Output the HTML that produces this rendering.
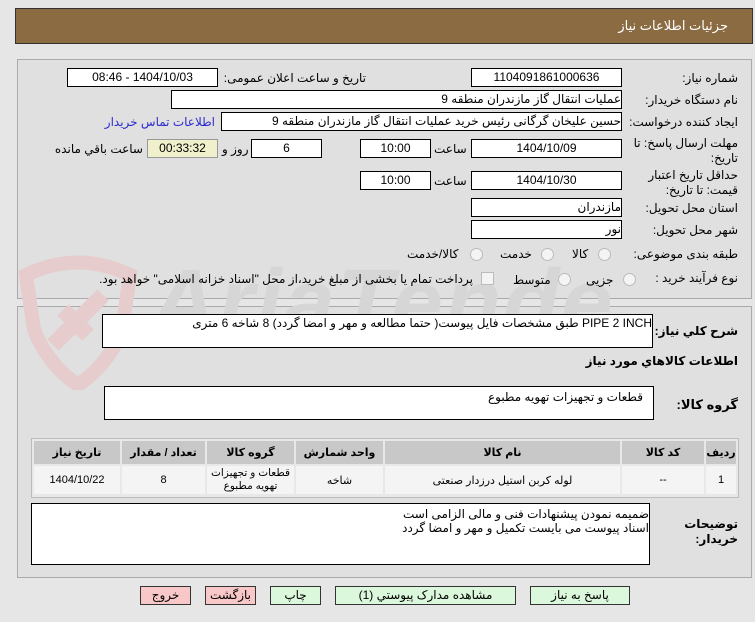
<!DOCTYPE html>
<html><head><meta charset="utf-8">
<style>
body{margin:0;width:755px;height:622px;background:#e6e6e6;font-family:"Liberation Sans","DejaVu Sans",sans-serif;font-size:12px;color:#000;position:relative;overflow:hidden}
.a{position:absolute}
.hdr{left:15px;top:8px;width:736px;height:34px;background:#8b6b42;border:1px solid #333;color:#fff;font-size:13px}
.panel{border:1px solid #aaa;background:#e0e0e0}
.box{position:absolute;background:#fff;border:1px solid #000;height:17px;line-height:17px;text-align:center;font-size:12px;direction:rtl;white-space:nowrap;overflow:hidden}
.lbl{position:absolute;direction:rtl;white-space:nowrap;font-size:12px;text-align:right}
.rad{position:absolute;width:11px;height:11px;border:1px solid #bbb;border-radius:50%;background:#f4f4f4}
table{border-collapse:separate;border-spacing:2px;direction:rtl;table-layout:fixed}
td,th{font-size:11px;text-align:center;padding:0;overflow:hidden}
th{background:#c8c8c8;height:23px;font-weight:bold}
td{background:#f4f4f4;height:28px}
.btn{position:absolute;top:586px;height:17px;line-height:17px;border:1px solid #333;text-align:center;font-size:12px;direction:rtl}
</style></head><body>
<div class="a hdr"><div class="a" style="right:24px;top:9px;direction:rtl">جزئیات اطلاعات نیاز</div></div>

<div class="a panel" style="left:17px;top:59px;width:733px;height:238px"></div>
<div class="a panel" style="left:17px;top:306px;width:733px;height:270px"></div>

<!-- watermark -->
<svg class="a" style="left:18px;top:250px" width="130" height="140" viewBox="0 0 130 140">
<path d="M8 25 Q60 0 112 25 L104 80 Q90 115 60 135 Q30 115 16 80 Z" fill="none" stroke="#e6cccc" stroke-width="14"/>
<path d="M35 95 L85 45 M45 60 L70 85" stroke="#e6cccc" stroke-width="16"/>
</svg>
<div class="a" style="left:150px;top:250px;width:470px;height:110px;overflow:hidden"><div style="font-size:92px;font-weight:bold;color:#d6d6d6;font-style:italic;letter-spacing:2px;white-space:nowrap">AriaTender.net</div></div>

<!-- row1 -->
<div class="lbl" style="right:17px;top:71px">شماره نیاز:</div>
<div class="box" style="left:471px;top:68px;width:149px">1104091861000636</div>
<div class="lbl" style="right:389px;top:71px">تاریخ و ساعت اعلان عمومی:</div>
<div class="box" style="left:67px;top:68px;width:149px">1404/10/03 - 08:46</div>
<!-- row2 -->
<div class="lbl" style="right:17px;top:93px">نام دستگاه خریدار:</div>
<div class="box" style="left:171px;top:90px;width:449px;text-align:right">عملیات انتقال گاز مازندران منطقه 9</div>
<!-- row3 -->
<div class="lbl" style="right:17px;top:115px">ایجاد کننده درخواست:</div>
<div class="box" style="left:221px;top:112px;width:399px;text-align:right">حسین علیخان گرگانی رئیس خرید عملیات انتقال گاز مازندران منطقه 9</div>
<div class="lbl" style="right:540px;top:115px;color:#2a2ad0">اطلاعات تماس خریدار</div>
<!-- row4 -->
<div class="lbl" style="right:17px;top:136px;line-height:15px">مهلت ارسال پاسخ: تا<br>تاریخ:</div>
<div class="box" style="left:471px;top:139px;width:149px">1404/10/09</div>
<div class="lbl" style="left:434px;top:142px">ساعت</div>
<div class="box" style="left:360px;top:139px;width:69px">10:00</div>
<div class="box" style="left:251px;top:139px;width:69px">6</div>
<div class="lbl" style="left:222px;top:142px">روز و</div>
<div class="box" style="left:147px;top:139px;width:69px;background:#f0f0cc;border-color:#999">00:33:32</div>
<div class="lbl" style="right:612px;top:142px">ساعت باقي مانده</div>
<!-- row5 -->
<div class="lbl" style="right:17px;top:168px;line-height:15px">حداقل تاریخ اعتبار<br>قیمت: تا تاریخ:</div>
<div class="box" style="left:471px;top:171px;width:149px">1404/10/30</div>
<div class="lbl" style="left:434px;top:174px">ساعت</div>
<div class="box" style="left:360px;top:171px;width:69px">10:00</div>
<!-- row6,7 -->
<div class="lbl" style="right:17px;top:201px">استان محل تحویل:</div>
<div class="box" style="left:471px;top:198px;width:149px;text-align:right">مازندران</div>
<div class="lbl" style="right:17px;top:223px">شهر محل تحویل:</div>
<div class="box" style="left:471px;top:220px;width:149px;text-align:right">نور</div>
<!-- row8 -->
<div class="lbl" style="right:17px;top:247px">طبقه بندی موضوعی:</div>
<div class="rad" style="left:598px;top:248px"></div><div class="lbl" style="left:572px;top:247px">کالا</div>
<div class="rad" style="left:541px;top:248px"></div><div class="lbl" style="left:500px;top:247px">خدمت</div>
<div class="rad" style="left:470px;top:248px"></div><div class="lbl" style="left:407px;top:247px">کالا/خدمت</div>
<!-- row9 -->
<div class="lbl" style="right:17px;top:271px">نوع فرآیند خرید :</div>
<div class="rad" style="left:623px;top:273px"></div><div class="lbl" style="left:586px;top:273px">جزیی</div>
<div class="rad" style="left:558px;top:273px"></div><div class="lbl" style="left:513px;top:273px">متوسط</div>
<div class="a" style="left:481px;top:272px;width:11px;height:11px;border:1px solid #bbb;background:#f4f4f4"></div>
<div class="lbl" style="right:282px;top:272px">پرداخت تمام یا بخشی از مبلغ خرید،از محل "اسناد خزانه اسلامی" خواهد بود.</div>

<!-- second panel -->
<div class="lbl" style="right:17px;top:324px;font-weight:bold">شرح کلي نياز:</div>
<div class="box" style="left:102px;top:314px;width:549px;height:32px;text-align:right;line-height:17px">PIPE 2 INCH طبق مشخصات فایل پیوست( حتما مطالعه و مهر و امضا گردد) 8 شاخه 6 متری</div>
<div class="lbl" style="right:17px;top:354px;font-weight:bold">اطلاعات کالاهاي مورد نياز</div>
<div class="lbl" style="right:17px;top:397px;font-weight:bold;font-size:13px">گروه کالا:</div>
<div class="box" style="left:104px;top:386px;width:548px;height:32px;text-align:right;line-height:20px"><span style="padding-right:10px">قطعات و تجهیزات تهویه مطبوع</span></div>

<div class="a" style="left:31px;top:438px;width:706px;height:58px;border:1px solid #bbb;background:#e8e8e8;overflow:hidden">
<table style="width:706px;margin:0">
<colgroup><col style="width:30px"><col style="width:82px"><col style="width:235px"><col style="width:87px"><col style="width:87px"><col style="width:83px"><col></colgroup>
<tr><th>ردیف</th><th>کد کالا</th><th>نام کالا</th><th>واحد شمارش</th><th>گروه کالا</th><th>تعداد / مقدار</th><th>تاریخ نیاز</th></tr>
<tr><td>1</td><td>--</td><td>لوله کربن استیل درزدار صنعتی</td><td>شاخه</td><td style="line-height:13px;font-size:10.5px">قطعات و تجهیزات<br>تهویه مطبوع</td><td>8</td><td>1404/10/22</td></tr>
</table></div>

<div class="lbl" style="right:17px;top:517px;font-weight:bold;line-height:15px">توضیحات<br>خریدار:</div>
<div class="box" style="left:31px;top:503px;width:619px;height:62px;text-align:right;line-height:14px;padding-top:3px;box-sizing:border-box">ضمیمه نمودن پیشنهادات فنی و مالی الزامی است<br>اسناد پیوست می بایست تکمیل و مهر و امضا گردد</div>

<div class="btn" style="left:140px;width:49px;background:#f8c8c8">خروج</div>
<div class="btn" style="left:205px;width:49px;background:#f8c8c8">بازگشت</div>
<div class="btn" style="left:270px;width:49px;background:#dcf8dc">چاپ</div>
<div class="btn" style="left:335px;width:179px;background:#dcf8dc">مشاهده مدارک پیوستي (1)</div>
<div class="btn" style="left:530px;width:98px;background:#dcf8dc">پاسخ به نیاز</div>
</body></html>
